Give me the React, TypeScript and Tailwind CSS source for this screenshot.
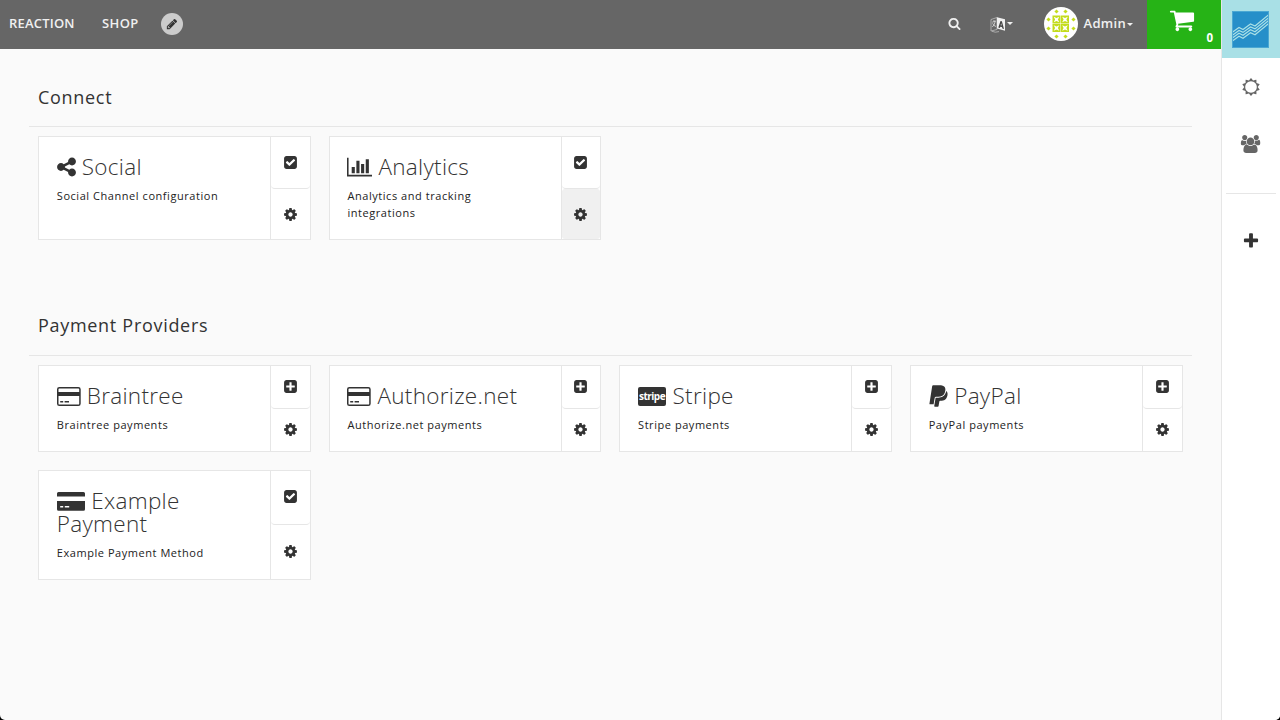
import type { ReactNode } from "react";
import { FaPaypal } from "react-icons/fa";

const paths = {
  search:
    "M1216 832q0-185-131.5-316.5t-316.5-131.5-316.5 131.5-131.5 316.5 131.5 316.5 316.5 131.5 316.5-131.5 131.5-316.5zm512 832q0 52-38 90t-90 38q-54 0-90-38l-343-342q-179 124-399 124-143 0-273.5-55.5t-225-150-150-225-55.5-273.5 55.5-273.5 150-225 225-150 273.5-55.5 273.5 55.5 225 150 150 225 55.5 273.5q0 220-124 399l343 343q37 37 37 90z",
  cog: "M1152 896q0-106-75-181t-181-75-181 75-75 181 75 181 181 75 181-75 75-181zm512-109v222q0 12-8 23t-20 13l-185 28q-19 54-39 91 35 50 107 138 10 12 10 25t-9 23q-27 37-99 108t-94 71q-12 0-26-9l-138-108q-44 23-91 38-16 136-29 186-7 28-36 28h-222q-14 0-24.5-8.5t-11.5-21.5l-28-184q-49-16-90-37l-141 107q-10 9-25 9-14 0-25-11-126-114-165-168-7-10-7-23 0-12 8-23 15-21 51-66.5t54-70.5q-27-50-41-99l-183-27q-13-2-21-12.5t-8-23.5v-222q0-12 8-23t19-13l186-28q14-46 39-92-40-57-107-138-10-12-10-24 0-10 9-23 26-36 98.5-107.5t94.5-71.5q13 0 26 10l138 107q44-23 91-38 16-136 29-186 7-28 36-28h222q14 0 24.5 8.5t11.5 21.5l28 184q49 16 90 37l142-107q9-9 24-9 13 0 25 10 129 119 165 170 7 8 7 22 0 12-8 23-15 21-51 66.5t-54 70.5q26 50 41 98l183 28q13 2 21 12.5t8 23.5z",
  check:
    "M813 1299l614-614q19-19 19-45t-19-45l-102-102q-19-19-45-19t-45 19l-467 467-211-211q-19-19-45-19t-45 19l-102 102q-19 19-19 45t19 45l358 358q19 19 45 19t45-19zm851-883v960q0 119-84.5 203.5t-203.5 84.5h-960q-119 0-203.5-84.5t-84.5-203.5v-960q0-119 84.5-203.5t203.5-84.5h960q119 0 203.5 84.5t84.5 203.5z",
  plusSquare:
    "M1408 960v-128q0-26-19-45t-45-19h-320v-320q0-26-19-45t-45-19h-128q-26 0-45 19t-19 45v320h-320q-26 0-45 19t-19 45v128q0 26 19 45t45 19h320v320q0 26 19 45t45 19h128q26 0 45-19t19-45v-320h320q26 0 45-19t19-45zm256-544v960q0 119-84.5 203.5t-203.5 84.5h-960q-119 0-203.5-84.5t-84.5-203.5v-960q0-119 84.5-203.5t203.5-84.5h960q119 0 203.5 84.5t84.5 203.5z",
  share:
    "M1344 1024q133 0 226.5 93.5t93.5 226.5-93.5 226.5-226.5 93.5-226.5-93.5-93.5-226.5q0-12 2-34l-360-180q-92 86-218 86-133 0-226.5-93.5t-93.5-226.5 93.5-226.5 226.5-93.5q126 0 218 86l360-180q-2-22-2-34 0-133 93.5-226.5t226.5-93.5 226.5 93.5 93.5 226.5-93.5 226.5-226.5 93.5q-126 0-218-86l-360 180q2 22 2 34t-2 34l360 180q92-86 218-86z",
  chart:
    "M640 896v512h-256v-512h256zm384-512v1024h-256v-1024h256zm1024 1152v128h-2048v-1536h128v1408h1920zm-640-896v768h-256v-768h256zm384-384v1152h-256v-1152h256z",
  cart: "M704 1536q0 52-38 90t-90 38-90-38-38-90 38-90 90-38 90 38 38 90zm896 0q0 52-38 90t-90 38-90-38-38-90 38-90 90-38 90 38 38 90zm128-1088v512q0 24-16.5 42.5t-40.5 21.5l-1044 122q13 60 13 70 0 16-24 64h920q26 0 45 19t19 45-19 45-45 19h-1024q-26 0-45-19t-19-45q0-11 8-31.5t16-36 21.5-40 15.5-29.5l-177-823h-204q-26 0-45-19t-19-45 19-45 45-19h256q16 0 28.5 6.5t19.5 15.5 13 24.5 8 26 5.5 29.5 4.5 26h1201q26 0 45 19t19 45z",
  plus: "M1600 736v192q0 40-28 68t-68 28h-416v416q0 40-28 68t-68 28h-192q-40 0-68-28t-28-68v-416h-416q-40 0-68-28t-28-68v-192q0-40 28-68t68-28h416v-416q0-40 28-68t68-28h192q40 0 68 28t28 68v416h416q40 0 68 28t28 68z",
  pencil:
    "M491 1536l91-91-235-235-91 91v107h128v128h107zm523-928q0-22-22-22-10 0-17 7l-542 542q-7 7-7 17 0 22 22 22 10 0 17-7l542-542q7-7 7-17zm-54-192l416 416-832 832h-416v-416zm683 96q0 53-37 90l-166 166-416-416 166-165q36-38 90-38 53 0 91 38l235 234q37 39 37 91z",
  sun: "M1472 896q0-117-45.5-223.5t-123-184-184-123-223.5-45.5-223.5 45.5-184 123-123 184-45.5 223.5 45.5 223.5 123 184 184 123 223.5 45.5 223.5-45.5 184-123 123-184 45.5-223.5zm276 277q-4 15-20 20l-292 96v306q0 16-13 26-15 10-29 4l-292-94-180 248q-10 13-26 13t-26-13l-180-248-292 94q-14 6-29-4-13-10-13-26v-306l-292-96q-16-5-20-20-5-17 4-29l180-248-180-248q-9-13-4-29 4-15 20-20l292-96v-306q0-16 13-26 15-10 29-4l292 94 180-248q9-12 26-12t26 12l180 248 292-94q14-6 29 4 13 10 13 26v306l292 96q16 5 20 20 5 16-4 29l-180 248 180 248q9 12 4 29z",
  users:
    "M657 896q-162 5-265 128h-134q-82 0-138-40.5t-56-118.5q0-353 124-353 6 0 43.5 21t97.5 42.5 119 21.5q67 0 133-23-5 37-5 66 0 159 93 293zm1071 637q0 120-73 189.5t-194 69.5h-874q-121 0-194-69.5t-73-189.5q0-53 3.5-103.5t14-109 26.5-108.5 43-97.5 62-81 85.5-53.5 111.5-20q10 0 43 21.5t73 48 107 48 135 21.5 135-21.5 107-48 73-48 43-21.5q61 0 111.5 20t85.5 53.5 62 81 43 97.5 26.5 108.5 14 109 3.5 103.5zm-1024-1277q0 106-75 181t-181 75-181-75-75-181 75-181 181-75 181 75 75 181zm704 384q0 159-112.5 271.5t-271.5 112.5-271.5-112.5-112.5-271.5 112.5-271.5 271.5-112.5 271.5 112.5 112.5 271.5zm576 225q0 78-56 118.5t-138 40.5h-134q-103-123-265-128 93-134 93-293 0-29-5-66 66 23 133 23 59 0 119-21.5t97.5-42.5 43.5-21q124 0 124 353zm-128-609q0 106-75 181t-181 75-181-75-75-181 75-181 181-75 181 75 75 181z",
};

function Icon({ name, box = "0 0 1792 1792", className }: { name: keyof typeof paths; box?: string; className: string }) {
  return (
    <svg viewBox={box} className={className} fill="currentColor">
      <path d={paths[name]} />
    </svg>
  );
}

function CardOutline() {
  return (
    <svg viewBox="0 0 24 19" className="mr-[6px] inline-block h-[19px] w-[24px] align-[-2px]">
      <rect x="0.75" y="0.75" width="22.2" height="17.5" rx="1.6" fill="none" stroke="currentColor" strokeWidth="1.5" />
      <path d="M1 5h22v4H1zM3.2 14h3v1.4h-3zM7.6 14h4.4v1.4H7.6z" fill="currentColor" />
    </svg>
  );
}

function CardSolid() {
  return (
    <svg viewBox="0 0 28 19" className="mr-[6.5px] inline-block h-[19px] w-[28px] align-[-2px]">
      <path
        fillRule="evenodd"
        fill="currentColor"
        d="M1.5 0h25Q28 0 28 1.500V4.500H0V1.500Q0 0 1.500 0zM0 9h28v8.200q0 1.500-1.500 1.500h-25Q0 18.700 0 17.200zM3.200 14v1.400h3V14zM7.800 14v1.400h4.400V14z"
      />
    </svg>
  );
}

function StripeBadge() {
  return (
    <span className="mt-[3px] mr-[6.5px] inline-flex h-[19px] w-[28px] items-center justify-center rounded-[2px] bg-[#333] align-top font-['Open_Sans',sans-serif] text-[10px] leading-none font-bold tracking-[-0.5px] text-white">
      <span className="-mt-[2px]">stripe</span>
    </span>
  );
}

function Caret({ className = "" }: { className?: string }) {
  return <span className={`block h-0 w-0 border-x-[3px] border-t-[3px] border-x-transparent border-t-[#f0f0f0] ${className}`} />;
}

function Avatar() {
  const dots = [
    [12.5, 4.5], [21.5, 4.5], [4.5, 12.5], [29.5, 12.5], [4.5, 21.5], [29.5, 21.5], [12.5, 29.5], [21.5, 29.5],
  ];
  return (
    <svg viewBox="0 0 34 34" className="mb-[2px] h-[34px] w-[34px]">
      <circle cx="17" cy="17" r="17" fill="#fff" />
      {[8.5, 17].map((x) =>
        [8.5, 17].map((y) => (
          <g key={`${x}-${y}`}>
            <rect x={x} y={y} width="8" height="8" fill="#c3dc1c" />
            <path d={`M${x + 4} ${y + 4}m-2.800-2.800l2.800 1.400l2.800-1.400l-1.400 2.800l1.400 2.800l-2.800-1.400l-2.800 1.400l1.400-2.800z`} fill="#fff" />
          </g>
        )),
      )}
      {dots.map(([x, y]) => (
        <path key={`${x}-${y}`} d={`M${x} ${y - 2.1}l2.100 2.100l-2.100 2.100l-2.100-2.100z`} fill="#c3dc1c" />
      ))}
    </svg>
  );
}

function Language() {
  return (
    <svg viewBox="0 0 16 17" className="-mt-px h-[17px] w-[16px]">
      <path d="M1 3.500L7 1.500v12L1 15z" fill="#666" stroke="#bdbdbd" strokeWidth="0.8" />
      <path d="M2.200 6.200l3.800-1.200M4 4v1.500M5.200 5.600Q4.500 9 2.300 11M2.600 7.300Q3.600 10 6 10.500" stroke="#ddd" strokeWidth="0.8" fill="none" />
      <path d="M7 1.300l8 2v11.400l-8-2.200z" fill="#f0f0f0" />
      <path d="M8.300 11.600L10.500 5l1.400 .3L14 13l-1.600-.4-.4-1.500-1.700-.4-.5 1.400zM10.600 9.300l1.100.3-.5-2.300z" fill="#444" fillRule="evenodd" />
      <path d="M2 15.300q3 1.600 7 .3" stroke="#bdbdbd" strokeWidth="0.8" fill="none" />
    </svg>
  );
}

function Logo() {
  return (
    <svg viewBox="0 0 37 37" className="mr-px h-[37px] w-[37px]">
      <rect width="37" height="37" fill="#268fc9" />
      {[0, 2.9, 5.8, 8.7].map((d) => (
        <path
          key={d}
          d={`M0 ${21.5 + d}L7 ${16.5 + d}L11 ${18.5 + d}L18.500 ${13 + d}L23 ${15 + d}L37 ${3.5 + d}`}
          fill="none"
          stroke="#a9e0e6"
          strokeWidth="1.2"
        />
      ))}
      <rect x="0.5" y="0.5" width="36" height="36" fill="none" stroke="#4ba8d3" />
    </svg>
  );
}

const sizes = {
  sm: { card: "h-[87px]", toggle: "h-[43px] pb-[2px]", settings: "pb-[2px]" },
  md: { card: "h-[104px]", toggle: "h-[52px] pb-px", settings: "" },
  lg: { card: "h-[110px]", toggle: "h-[54px] pb-[2px]", settings: "pb-[2px]" },
};

type CardProps = {
  icon: ReactNode;
  title: string;
  text: string;
  enabled?: boolean;
  hovered?: boolean;
  size: keyof typeof sizes;
};

function PackageCard({ icon, title, text, enabled, hovered, size }: CardProps) {
  const s = sizes[size];
  return (
    <div className={`mx-[9px] mb-[18px] flex border border-[#e6e6e6] bg-white ${s.card}`}>
      <div className="min-w-0 flex-1 pt-[18px] pr-[36px] pl-[17.8px]">
        <h3 className="text-[22.5px] leading-[23px] font-light tracking-[0.3px]">
          {icon}
          {title}
        </h3>
        <p className="mt-[9px] text-[11px] leading-[17px] tracking-[0.55px] text-[#222]">{text}</p>
      </div>
      <div className="flex w-[39.7px] flex-col border-l border-[#e6e6e6]">
        <button className={`flex shrink-0 items-center justify-center rounded-b-[4px] border-b border-[#e6e6e6] ${s.toggle}`}>
          <Icon name={enabled ? "check" : "plusSquare"} className="h-[15px] w-[15px]" />
        </button>
        <button className={`flex flex-1 items-center justify-center rounded-[3px] ${s.settings} ${hovered ? "bg-[#f0f0f0]" : ""}`}>
          <Icon name="cog" className="h-[15px] w-[15px]" />
        </button>
      </div>
    </div>
  );
}

function Section({ title, spacing, children }: { title: string; spacing: string; children: ReactNode }) {
  return (
    <section>
      <h2 className={`border-b border-[#e6e6e6] pl-[9px] text-[18px] leading-[24px] tracking-[0.7px] ${spacing}`}>{title}</h2>
      <div className="grid grid-cols-4 pt-[9px]">{children}</div>
    </section>
  );
}

export default function App() {
  return (
    <div className="h-[720px] w-[1280px] overflow-hidden bg-black font-['Open_Sans',sans-serif] text-[#333]">
      <div className="flex h-full overflow-hidden rounded-b-[5px] bg-[#fafafa]">
        <div className="flex w-[1221px] flex-col">
          <header className="flex h-[49px] items-center bg-[#666] text-[13px] font-semibold text-[#f0f0f0]">
            <span className="ml-[9px] w-[93px] pb-[2px] tracking-[0.2px]">REACTION</span>
            <span className="w-[59px] pb-[2px] tracking-[0.4px]">SHOP</span>
            <button className="mb-px flex h-[22px] w-[22px] items-center justify-center rounded-full bg-[#ccc] text-[#333]">
              <Icon name="pencil" className="h-[12px] w-[12px]" />
            </button>
            <div className="ml-auto flex h-full items-center">
              <Icon name="search" className="mr-[29px] mb-[2px] h-[13px] w-[13px]" />
              <Language />
              <Caret className="mr-[31px] mb-[2px] ml-px" />
              <Avatar />
              <span className="ml-[5.5px] pb-[2px] tracking-[0.3px]">Admin</span>
              <Caret className="mr-[14px] ml-px" />
              <div className="flex h-full w-[74px] justify-between bg-[#26b316] pr-[8px] pl-[21.5px] text-white">
                <Icon name="cart" className="mt-[7px] h-[26px] w-[26px]" />
                <span className="mt-[31px] text-[11.5px] leading-[14px] font-bold">0</span>
              </div>
            </div>
          </header>
          <main className="pr-[29.5px] pl-[29px]">
            <div className="h-[31px]" />
            <div className="h-[229px]">
              <Section title="Connect" spacing="pt-[5px] pb-[17px]">
                <PackageCard
                  size="md"
                  enabled
                  icon={<Icon name="share" box="128 0 1536 1792" className="mr-[6px] inline-block h-[22px] w-[19px] align-[-3px]" />}
                  title="Social"
                  text="Social Channel configuration"
                />
                <PackageCard
                  size="md"
                  enabled
                  hovered
                  icon={<Icon name="chart" box="0 0 2048 1792" className="mr-[6px] inline-block h-[22px] w-[25px] align-[-3px]" />}
                  title="Analytics"
                  text="Analytics and tracking integrations"
                />
              </Section>
            </div>
            <Section title="Payment Providers" spacing="pt-[4px] pb-[18px]">
              <PackageCard size="sm" icon={<CardOutline />} title="Braintree" text="Braintree payments" />
              <PackageCard size="sm" icon={<CardOutline />} title="Authorize.net" text="Authorize.net payments" />
              <PackageCard size="sm" icon={<StripeBadge />} title="Stripe" text="Stripe payments" />
              <PackageCard
                size="sm"
                icon={<FaPaypal className="mr-[6.5px] inline-block h-[22px] w-[19px] scale-[1.1] align-[-3px]" />}
                title="PayPal"
                text="PayPal payments"
              />
              <PackageCard size="lg" enabled icon={<CardSolid />} title="Example Payment" text="Example Payment Method" />
            </Section>
          </main>
        </div>
        <aside className="flex w-[59px] flex-col items-center border-l border-[#e6e6e6] bg-white text-[#666]">
          <div className="flex h-[58px] w-full items-center justify-center bg-[#a9e0e6]">
            <Logo />
          </div>
          <div className="flex h-[58px] items-center pr-px pb-px">
            <Icon name="sun" className="h-[18px] w-[18px]" />
          </div>
          <div className="flex h-[58px] items-center pr-px pb-[2px]">
            <Icon name="users" box="0 0 2048 1792" className="h-[18px] w-[21px]" />
          </div>
          <div className="mt-[19px] h-px w-[50px] bg-[#e6e6e6]" />
          <Icon name="plus" className="mt-[38px] h-[18px] w-[18px] text-[#333]" />
        </aside>
      </div>
    </div>
  );
}
